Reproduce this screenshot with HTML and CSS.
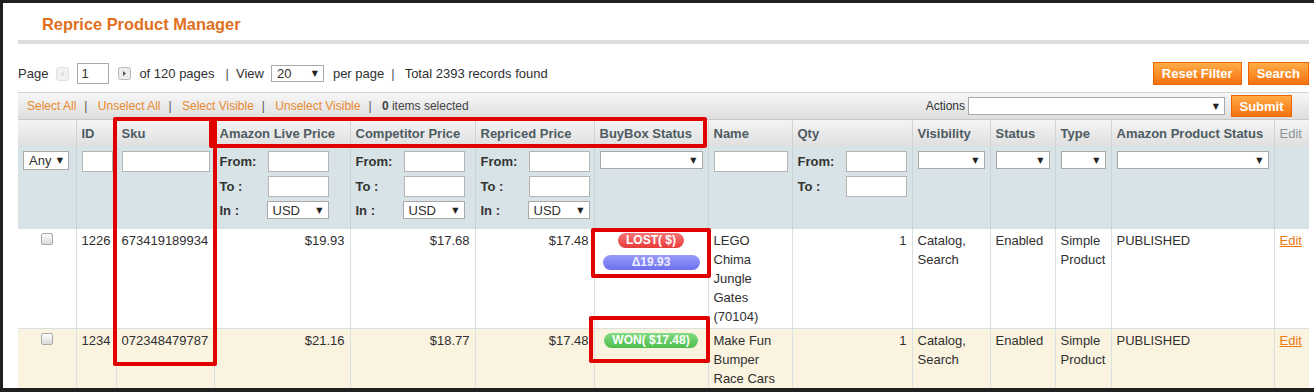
FILE: index.html
```html
<!DOCTYPE html>
<html>
<head>
  <title>Reprice Product Manager</title>
  <link rel="stylesheet" href="styles.css">
</head>
<body>
  <div id="page">
    <h1 class="title">Reprice Product Manager</h1>
    <div class="titleBar"></div>

    <!-- paginacion -->
    <div class="pager">
      <div class="pagerLeft">
        <span>Page</span>
        <svg class="arrowBtn" width="13" height="14" viewBox="0 0 13 14">
          <rect x="0.5" y="0.5" width="12" height="13" rx="2" fill="#f2f2f2" stroke="#e0e0e0"/>
          <path d="M7.5 4.5 L4.5 7 L7.5 9.5 Z" fill="#d6d6d6"/>
        </svg>
        <input type="text" class="pageInput" value="1">
        <svg class="arrowBtn next" width="13" height="13" viewBox="0 0 13 13">
          <rect x="0.5" y="0.5" width="12" height="12" rx="2" fill="#ececec" stroke="#b8b8b8"/>
          <path d="M5 4 L8 6.5 L5 9 Z" fill="#555"/>
        </svg>
        <span>of 120 pages</span>
        <span class="sep">|</span>
        <span>View</span>
        <div class="select viewSelect"><span>20</span><span class="caret">&#9660;</span></div>
        <span>per page</span>
        <span class="sep short">|</span>
        <span>Total 2393 records found</span>
      </div>
      <div class="pagerRight">
        <button class="btn">Reset Filter</button>
        <button class="btn">Search</button>
      </div>
    </div>

    <!-- acciones masivas -->
    <div class="massaction">
      <div class="massLinks">
        <a href="#">Select All</a><span class="msep">|</span>
        <a href="#">Unselect All</a><span class="msep">|</span>
        <a href="#">Select Visible</a><span class="msep">|</span>
        <a href="#">Unselect Visible</a><span class="msep">|</span>
        <span><b>0</b> items selected</span>
      </div>
      <div class="massActions">
        <span class="actionsLabel">Actions</span>
        <div class="select actionsSelect"><span></span><span class="caret">&#9660;</span></div>
        <button class="btn submitBtn">Submit</button>
      </div>
    </div>

    <!-- tabla de productos -->
    <table class="grid">
      <colgroup>
        <col style="width:58px"><col style="width:40px"><col style="width:98px">
        <col style="width:136px"><col style="width:125px"><col style="width:119px">
        <col style="width:114px"><col style="width:84px"><col style="width:120px">
        <col style="width:78px"><col style="width:65px"><col style="width:56px">
        <col style="width:163px"><col style="width:35px">
      </colgroup>
      <thead>
        <tr class="headings">
          <th></th>
          <th>ID</th>
          <th>Sku</th>
          <th>Amazon Live Price</th>
          <th>Competitor Price</th>
          <th>Repriced Price</th>
          <th>BuyBox Status</th>
          <th>Name</th>
          <th>Qty</th>
          <th>Visibility</th>
          <th>Status</th>
          <th>Type</th>
          <th>Amazon Product Status</th>
          <th class="editHead">Edit</th>
        </tr>
        <tr class="filter">
          <td><div class="select anySelect"><span>Any</span><span class="caret">&#9660;</span></div></td>
          <td><input type="text" class="idInput"></td>
          <td><input type="text" class="skuInput"></td>
          <td>
            <div class="range">
              <span>From:</span><input type="text">
              <span>To :</span><input type="text">
              <span>In :</span><div class="select curSelect"><span>USD</span><span class="caret">&#9660;</span></div>
            </div>
          </td>
          <td>
            <div class="range">
              <span>From:</span><input type="text">
              <span>To :</span><input type="text">
              <span>In :</span><div class="select curSelect"><span>USD</span><span class="caret">&#9660;</span></div>
            </div>
          </td>
          <td>
            <div class="range">
              <span>From:</span><input type="text">
              <span>To :</span><input type="text">
              <span>In :</span><div class="select curSelect"><span>USD</span><span class="caret">&#9660;</span></div>
            </div>
          </td>
          <td><div class="select wideSelect"><span></span><span class="caret">&#9660;</span></div></td>
          <td><input type="text" class="nameInput"></td>
          <td>
            <div class="range">
              <span>From:</span><input type="text">
              <span>To :</span><input type="text">
            </div>
          </td>
          <td><div class="select wideSelect"><span></span><span class="caret">&#9660;</span></div></td>
          <td><div class="select wideSelect"><span></span><span class="caret">&#9660;</span></div></td>
          <td><div class="select wideSelect"><span></span><span class="caret">&#9660;</span></div></td>
          <td><div class="select wideSelect"><span></span><span class="caret">&#9660;</span></div></td>
          <td></td>
        </tr>
      </thead>
      <tbody>
        <tr class="row">
          <td><span class="check"></span></td>
          <td class="num">1226</td>
          <td>673419189934</td>
          <td class="num">$19.93</td>
          <td class="num">$17.68</td>
          <td class="num">$17.48</td>
          <td class="buybox">
            <span class="badge lost">LOST( $)</span>
            <span class="badge diff">&Delta;19.93</span>
          </td>
          <td>LEGO Chima Jungle Gates (70104)</td>
          <td class="num">1</td>
          <td>Catalog, Search</td>
          <td>Enabled</td>
          <td>Simple Product</td>
          <td>PUBLISHED</td>
          <td><a href="#" class="editLink">Edit</a></td>
        </tr>
        <tr class="row even">
          <td><span class="check"></span></td>
          <td class="num">1234</td>
          <td>072348479787</td>
          <td class="num">$21.16</td>
          <td class="num">$18.77</td>
          <td class="num">$17.48</td>
          <td class="buybox">
            <span class="badge won">WON( $17.48)</span>
          </td>
          <td>Make Fun Bumper Race Cars</td>
          <td class="num">1</td>
          <td>Catalog, Search</td>
          <td>Enabled</td>
          <td>Simple Product</td>
          <td>PUBLISHED</td>
          <td><a href="#" class="editLink">Edit</a></td>
        </tr>
      </tbody>
    </table>

    <!-- marcas rojas -->
    <div class="mark markSku"></div>
    <div class="mark markHead"></div>
    <div class="mark markLost"></div>
    <div class="mark markWon"></div>
  </div>
</body>
</html>
```

FILE: styles.css
```css
body {
  margin: 0;
  height: 392px;
  overflow: hidden;
  background-color: #1f1f1f;
  font-family: "Liberation Sans", Arial, sans-serif;
  font-size: 13px;
  color: #2f2f2f;
}

#page {
  position: relative;
  margin: 3px 0 0 3px;
  height: 385px;
  background-color: #fff;
  overflow: hidden;
}

.title {
  margin: 0;
  padding: 11px 0 0 39px;
  font-size: 16.4px;
  line-height: 20px;
  font-weight: bold;
  color: #e0701e;
}

.titleBar {
  margin: 6px 5px 0 15px;
  height: 4px;
  background-color: #dddddd;
}

/* paginacion */
.pager {
  display: flex;
  justify-content: space-between;
  align-items: center;
  margin: 18px 5px 0 15px;
  height: 23px;
}

.pagerLeft {
  display: flex;
  align-items: center;
}

.arrowBtn {
  margin-left: 8px;
  display: block;
}

.arrowBtn.next {
  margin-left: 9px;
  margin-right: 8px;
}

.pageInput {
  box-sizing: border-box;
  width: 32px;
  height: 21px;
  margin-left: 8px;
  padding: 0 3px;
  border: 1px solid #aaa;
  font: 13px "Liberation Sans", Arial, sans-serif;
  color: #2f2f2f;
}

.sep {
  margin: 0 7px 0 11px;
  color: #555;
}

.sep.short {
  margin: 0 10px 0 7px;
}

.pagerRight {
  display: flex;
  gap: 6px;
}

.btn {
  box-sizing: border-box;
  height: 23px;
  padding: 0 8px;
  border: 1px solid #ed6502;
  background: linear-gradient(#ffac47, #f6720f);
  color: #fff;
  font: bold 13px "Liberation Sans", Arial, sans-serif;
  cursor: pointer;
}

/* selects simulados */
.select {
  box-sizing: border-box;
  display: flex;
  justify-content: space-between;
  align-items: center;
  background-color: #fff;
  border: 1px solid #a9a9a9;
  padding: 0 5px;
  font-size: 13px;
  color: #2f2f2f;
}

.caret {
  font-family: "DejaVu Sans", sans-serif;
  font-size: 8px;
  color: #222;
}

.viewSelect {
  width: 53px;
  height: 17px;
  margin: 0 9px 0 7px;
}

/* acciones masivas */
.massaction {
  display: flex;
  justify-content: space-between;
  align-items: center;
  margin: 7px 5px 0 15px;
  height: 26px;
  border-top: 1px solid #d4d4d4;
  border-bottom: 1px solid #c8c8c8;
  background: linear-gradient(#f7f7f7, #dedede);
  font-size: 12px;
}

.massLinks {
  padding-left: 9px;
  color: #444;
}

.massLinks a {
  color: #e98a30;
  text-decoration: none;
}

.msep {
  margin: 0 7px 0 8px;
  color: #555;
}

.massActions {
  display: flex;
  align-items: center;
  padding-right: 17px;
}

.actionsLabel {
  color: #333;
  margin-right: 3px;
}

.actionsSelect {
  width: 257px;
  height: 18px;
  margin-right: 6px;
}

.submitBtn {
  height: 22px;
  width: 61px;
  padding: 0;
}

/* tabla */
.grid {
  margin-left: 15px;
  width: 1291px;
  border-collapse: collapse;
  table-layout: fixed;
}

.headings th {
  height: 26px;
  padding: 0 5px;
  text-align: left;
  font-size: 13px;
  font-weight: bold;
  color: #4e5b62;
  background: linear-gradient(#f4f4f4, #dfdfdf);
  border-left: 1px solid #d2d2d2;
  white-space: nowrap;
  overflow: hidden;
}

.headings th:first-child {
  border-left: none;
}

.headings .editHead {
  font-weight: normal;
  color: #8a9499;
}

.filter td {
  vertical-align: top;
  padding: 5px 5px 10px;
  background-color: #d8e3e7;
  border-left: 1px solid #c7d3d7;
}

.filter td:first-child {
  border-left: none;
}

.filter input {
  box-sizing: border-box;
  height: 21px;
  padding: 0 3px;
  border: 1px solid #b5b5b5;
  background-color: #fff;
  font: 13px "Liberation Sans", Arial, sans-serif;
  display: block;
}

.idInput {
  width: 31px;
}

.skuInput {
  width: 88px;
}

.nameInput {
  width: 74px;
}

.anySelect {
  width: 46px;
  height: 19px;
}

.wideSelect {
  height: 18px;
}

.range {
  display: grid;
  grid-template-columns: 48px 61px;
  row-gap: 4px;
  align-items: center;
  font-weight: bold;
  color: #333;
}

.range input {
  width: 61px;
}

.curSelect {
  width: 62px;
  height: 18px;
  margin-left: -1px;
  font-weight: normal;
}

.row td {
  vertical-align: top;
  padding: 2px 5px;
  line-height: 19px;
  border-left: 1px solid #dadfe0;
  border-bottom: 1px solid #dadfe0;
  background-color: #fff;
}

.row td:first-child {
  border-left: none;
}

.row.even td {
  background-color: #faf3df;
}

.num {
  text-align: right;
}

.check {
  display: block;
  width: 12px;
  height: 12px;
  margin: 2px auto 0;
  box-sizing: border-box;
  border: 1px solid #a9a9a9;
  border-radius: 2px;
  background: linear-gradient(#fdfdfd, #dadada);
}

.buybox {
  text-align: center;
}

.badge {
  display: block;
  width: fit-content;
  margin: 2px auto 0;
  padding: 0 8px;
  height: 15px;
  line-height: 15px;
  border-radius: 8px;
  font-size: 12px;
  font-weight: bold;
  color: #fff;
}

.lost {
  background: linear-gradient(#f87676, #e73a3a);
}

.diff {
  width: auto;
  margin: 7px 3px 0;
  background: linear-gradient(#9a9cfa, #6c70ee);
  color: #eef;
}

.won {
  background: linear-gradient(#84dc84, #4bbd4b);
}

.editLink {
  color: #ea7a12;
  text-decoration: underline;
}

/* marcas rojas encima de la tabla */
.mark {
  position: absolute;
  box-sizing: border-box;
  border: 4px solid #e10000;
  border-radius: 2px;
}

.markSku {
  left: 110px;
  top: 114px;
  width: 104px;
  height: 249px;
}

.markHead {
  left: 206px;
  top: 114px;
  width: 498px;
  height: 31px;
}

.markLost {
  left: 588px;
  top: 225px;
  width: 120px;
  height: 50px;
}

.markWon {
  left: 586px;
  top: 313px;
  width: 121px;
  height: 47px;
}
```
